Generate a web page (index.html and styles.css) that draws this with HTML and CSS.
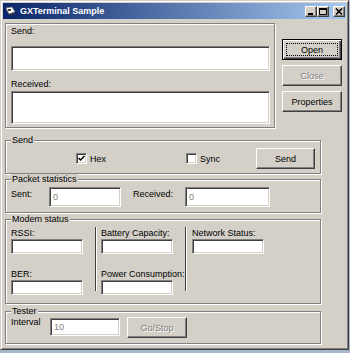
FILE: index.html
```html
<!DOCTYPE html>
<html>
<head>
  <meta charset="utf-8">
  <title>GXTerminal Sample</title>
  <link rel="stylesheet" href="styles.css">
</head>
<body>
  <div class="window">
    <div class="titlebar">
      <svg class="app-icon" width="11" height="10" viewBox="0 0 11 10">
        <path d="M1 2 L7 1 L10 6 L4 8 Z" fill="#fff" stroke="#808080" stroke-width="0.8"/>
        <path d="M4 8 L10 6 L10 7.5 L4 9.5 Z" fill="#404040"/>
        <rect x="3" y="3" width="3" height="2" fill="#404040"/>
      </svg>
      <span class="title">GXTerminal Sample</span>
      <div class="caption-buttons">
        <span class="cap-btn">
          <svg width="10" height="9" viewBox="0 0 10 9"><rect x="2" y="6" width="5" height="2" fill="#000"/></svg>
        </span>
        <span class="cap-btn">
          <svg width="10" height="9" viewBox="0 0 10 9"><path d="M1.5 1.5 H8.5 V7.5 H1.5 Z" fill="none" stroke="#000"/><rect x="1" y="1" width="8" height="2" fill="#000"/></svg>
        </span>
        <span class="cap-btn close">
          <svg width="10" height="9" viewBox="0 0 10 9"><path d="M2 1.5 L8 7.5 M8 1.5 L2 7.5" stroke="#000" stroke-width="1.6"/></svg>
        </span>
      </div>
    </div>

    <div class="client">
      <div class="top-row">
        <div class="io-frame">
          <label>Send:</label>
          <textarea class="textbox send-box"></textarea>
          <label class="recv-label">Received:</label>
          <textarea class="textbox recv-box"></textarea>
        </div>
        <div class="side-buttons">
          <button class="btn default"><span class="focus">Open</span></button>
          <button class="btn" disabled>Close</button>
          <button class="btn">Properties</button>
        </div>
      </div>

      <fieldset class="group send-group">
        <legend>Send</legend>
        <div class="row">
          <label class="check hex">
            <span class="box">
              <svg width="7" height="7" viewBox="0 0 7 7"><path d="M0.5 3 L2.5 5 L6.5 1" fill="none" stroke="#000" stroke-width="1.5"/></svg>
            </span>
            Hex
          </label>
          <label class="check sync"><span class="box"></span>Sync</label>
          <button class="btn send-btn">Send</button>
        </div>
      </fieldset>

      <fieldset class="group packet-group">
        <legend>Packet statistics</legend>
        <div class="row">
          <span class="field-label sent-label">Sent:</span>
          <input class="textbox stat-box" value="0" disabled>
          <span class="field-label received-label">Received:</span>
          <input class="textbox stat-box wide" value="0" disabled>
        </div>
      </fieldset>

      <fieldset class="group modem-group">
        <legend>Modem status</legend>
        <div class="modem-row">
          <div class="modem-col">
            <span class="field-label">RSSI:</span>
            <input class="textbox small-box">
            <span class="field-label lower">BER:</span>
            <input class="textbox small-box">
          </div>
          <div class="vsep"></div>
          <div class="modem-col">
            <span class="field-label">Battery Capacity:</span>
            <input class="textbox small-box">
            <span class="field-label lower">Power Consumption:</span>
            <input class="textbox small-box">
          </div>
          <div class="vsep second"></div>
          <div class="modem-col third">
            <span class="field-label">Network Status:</span>
            <input class="textbox small-box">
          </div>
        </div>
      </fieldset>

      <fieldset class="group tester-group">
        <legend>Tester</legend>
        <div class="row">
          <span class="field-label interval-label">Interval</span>
          <input class="textbox interval-box" value="10" disabled>
          <button class="btn go-btn" disabled>Go/Stop</button>
        </div>
      </fieldset>
    </div>
  </div>
</body>
</html>
```

FILE: styles.css
```css
* {
  box-sizing: border-box;
}
body {
  margin: 0;
  background: #a9b7cd;
  font-family: "Liberation Sans", Arial, sans-serif;
  font-size: 9px;
  color: #000;
}
.window {
  width: 349px;
  height: 350px;
  background: #d4d0c8;
  border: 1px solid;
  border-color: #d4d0c8 #404040 #404040 #d4d0c8;
  box-shadow: inset 1px 1px #fff, inset -1px -1px #808080;
  padding: 2px;
}

/* title bar */
.titlebar {
  height: 16px;
  display: flex;
  align-items: center;
  background: linear-gradient(to right, #0a246a, #a6caf0);
  padding: 0 1px 0 2px;
}
.app-icon {
  margin-right: 4px;
}
.title {
  color: #fff;
  font-weight: bold;
  font-size: 9px;
  flex: 1;
}
.caption-buttons {
  display: flex;
}
.cap-btn {
  width: 12px;
  height: 11px;
  background: #d4d0c8;
  border: 1px solid;
  border-color: #fff #404040 #404040 #fff;
  box-shadow: inset -1px -1px #808080;
  display: flex;
  align-items: center;
  justify-content: center;
}
.cap-btn.close {
  margin-left: 4px;
}

/* client area */
.client {
  padding: 4px 0 0 2px;
}
.top-row {
  display: flex;
}
.io-frame {
  width: 270px;
  height: 105px;
  border: 1px solid #808080;
  box-shadow: inset 1px 1px #fff, 1px 1px #fff;
  padding: 1px 0 0 5px;
}
.io-frame label {
  display: block;
  line-height: 12px;
}
.textbox {
  display: block;
  background: #fff;
  border: 1px solid;
  border-color: #808080 #fff #fff #808080;
  box-shadow: inset 1px 1px #404040, inset -1px -1px #d4d0c8;
  font: inherit;
  color: #808080;
  padding: 0 3px;
  margin: 0;
  outline: none;
  resize: none;
}
.send-box {
  width: 259px;
  height: 25px;
  margin-top: 9px;
}
.recv-label {
  margin-top: 7px;
}
.recv-box {
  width: 259px;
  height: 33px;
  margin-top: 1px;
}
.side-buttons {
  display: flex;
  flex-direction: column;
  gap: 5px;
  margin: 16px 0 0 7px;
}
.btn {
  width: 60px;
  height: 21px;
  background: #d4d0c8;
  border: 1px solid;
  border-color: #fff #404040 #404040 #fff;
  box-shadow: inset -1px -1px #808080;
  font: inherit;
  color: #000;
  padding: 0;
}
.btn.default {
  border-color: #000;
  box-shadow: inset 1px 1px #fff, inset -1px -1px #404040, inset -2px -2px #808080;
  padding: 3px;
}
.btn .focus {
  display: flex;
  align-items: center;
  justify-content: center;
  height: 100%;
  border: 1px dotted #000;
}
.btn:disabled {
  color: #808080;
  text-shadow: 1px 1px #fff;
}

/* group boxes */
.group {
  width: 316px;
  margin: 0;
  min-width: 0;
  border: 1px solid #808080;
  box-shadow: inset 1px 1px #fff, 1px 1px #fff;
  padding: 0 0 0 5px;
}
.group legend {
  line-height: 10px;
  padding: 0 1px;
  margin-left: 0;
  background: #d4d0c8;
}
.row {
  display: flex;
  align-items: flex-start;
}
.field-label {
  display: block;
  line-height: 10px;
  white-space: nowrap;
}

.send-group {
  margin-top: 7px;
  padding-top: 3px;
  padding-bottom: 4px;
}
.send-group .row {
  align-items: center;
}
.check {
  display: flex;
  align-items: center;
  gap: 3px;
}
.check .box {
  width: 11px;
  height: 11px;
  background: #fff;
  border: 1px solid;
  border-color: #808080 #fff #fff #808080;
  box-shadow: inset 1px 1px #404040, inset -1px -1px #d4d0c8;
  display: flex;
  align-items: center;
  justify-content: center;
}
.check.hex {
  margin-left: 65px;
  width: 110px;
}
.check.sync {
  width: 70px;
}
.send-btn {
  width: 59px;
}

.packet-group {
  padding-top: 3px;
  padding-bottom: 5px;
}
.packet-group .field-label {
  margin-top: 2px;
}
.sent-label {
  width: 38px;
}
.received-label {
  width: 52px;
  margin-left: 12px;
}
.stat-box {
  width: 72px;
  height: 20px;
}
.stat-box.wide {
  width: 85px;
}

.modem-group {
  margin-top: 1px;
  padding-top: 4px;
  padding-bottom: 8px;
}
.modem-row {
  display: flex;
}
.modem-col {
  width: 72px;
}
.small-box {
  width: 72px;
  height: 15px;
  margin-top: 1px;
}
.field-label.lower {
  margin-top: 15px;
}
.vsep {
  width: 2px;
  border-left: 1px solid #404040;
  border-right: 1px solid #fff;
  margin: -1px 4px 4px 12px;
}
.modem-col.third {
  margin-left: 1px;
}

.tester-group {
  margin-top: 2px;
  padding-top: 1px;
  padding-bottom: 5px;
}
.interval-label {
  width: 39px;
}
.interval-box {
  width: 70px;
  height: 18px;
  margin-top: 1px;
}
.go-btn {
  margin-left: 7px;
}
```
